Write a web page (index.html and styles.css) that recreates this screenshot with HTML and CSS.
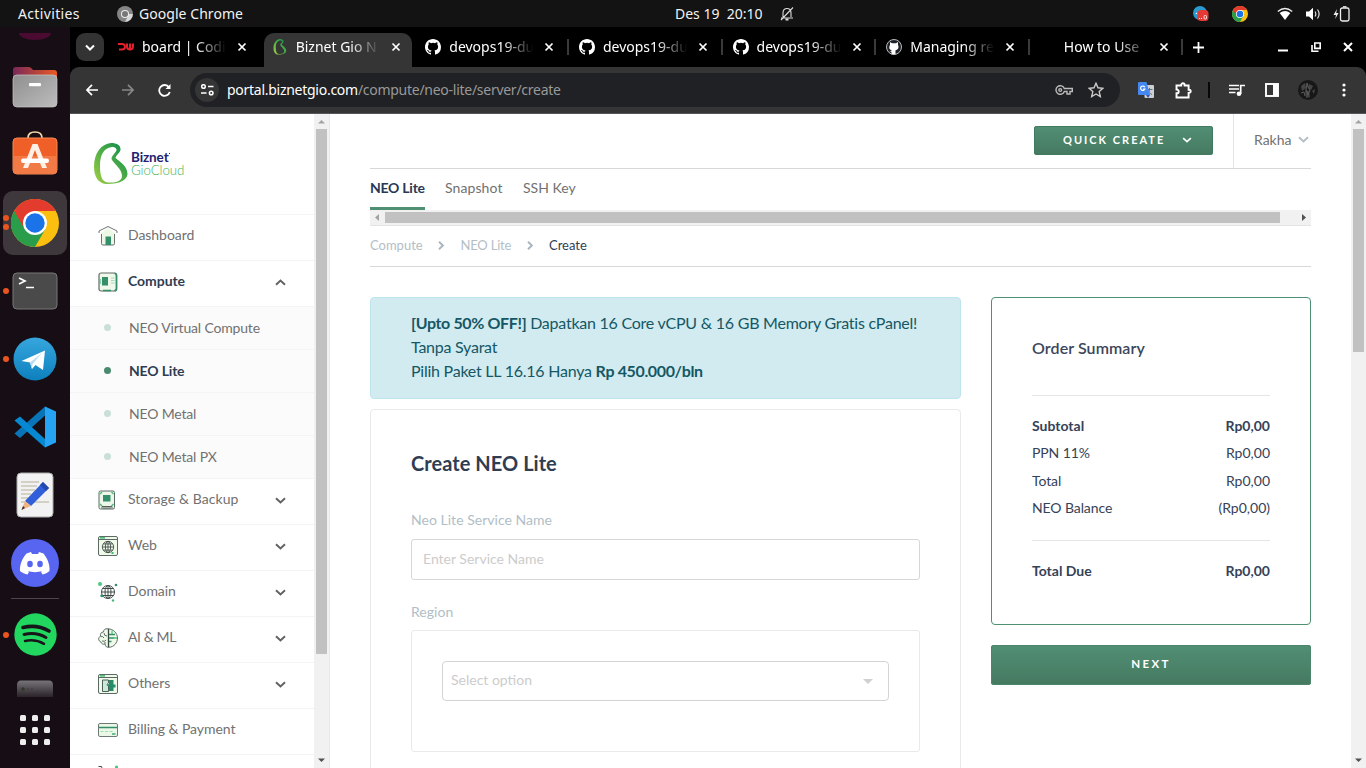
FILE: index.html
```html
<!DOCTYPE html>
<html lang="id">
<head>
<meta charset="utf-8">
<title>Biznet Gio NEO Lite</title>
<link rel="stylesheet" href="styles.css">
</head>
<body>
<svg class="defs" aria-hidden="true">
  <defs>
    <linearGradient id="leaf" x1="0" y1="1" x2="1" y2="0"><stop offset="0" stop-color="#a5cf45"/><stop offset=".5" stop-color="#4fae47"/><stop offset="1" stop-color="#07884b"/></linearGradient>
    <linearGradient id="folder" x1="0" y1="0" x2="1" y2="0"><stop offset="0" stop-color="#79285a"/><stop offset="1" stop-color="#ea5a22"/></linearGradient>
    <linearGradient id="grey" x1="0" y1="0" x2="1" y2="1"><stop offset="0" stop-color="#8f8f8f"/><stop offset="1" stop-color="#bdbdbd"/></linearGradient>
    <linearGradient id="tele" x1="0" y1="0" x2="0" y2="1"><stop offset="0" stop-color="#37a6de"/><stop offset="1" stop-color="#0d80bd"/></linearGradient>
    <linearGradient id="drive" x1="0" y1="0" x2="0" y2="1"><stop offset="0" stop-color="#77747a"/><stop offset="1" stop-color="#2a2328"/></linearGradient>
    <symbol id="x" viewBox="0 0 10 10"><path d="M1.5 1.5l7 7M8.5 1.5l-7 7" stroke="#fff" stroke-width="1.7" fill="none"/></symbol>
    <symbol id="gh" viewBox="0 0 16 16"><path fill="#fff" d="M8 0C3.58 0 0 3.58 0 8c0 3.54 2.29 6.53 5.47 7.59.4.07.55-.17.55-.38 0-.19-.01-.82-.01-1.49-2.01.37-2.53-.49-2.69-.94-.09-.23-.48-.94-.82-1.13-.28-.15-.68-.52-.01-.53.63-.01 1.08.58 1.23.82.72 1.21 1.87.87 2.33.66.07-.52.28-.87.51-1.07-1.78-.2-3.64-.89-3.64-3.95 0-.87.31-1.59.82-2.15-.08-.2-.36-1.02.08-2.12 0 0 .67-.21 2.2.82a7.6 7.6 0 0 1 4 0c1.53-1.04 2.2-.82 2.2-.82.44 1.1.16 1.92.08 2.12.51.56.82 1.27.82 2.15 0 3.07-1.87 3.75-3.65 3.95.29.25.54.73.54 1.48 0 1.07-.01 1.93-.01 2.2 0 .21.15.46.55.38A8 8 0 0 0 16 8c0-4.42-3.58-8-8-8z"/></symbol>
    <symbol id="down" viewBox="0 0 11 7"><path d="M1 1.200L5.500 5.400 10 1.200" fill="none" stroke="currentColor" stroke-width="2"/></symbol>
    <symbol id="right" viewBox="0 0 6 9"><path d="M1 .8l3.800 3.700L1 8.200" fill="none" stroke="currentColor" stroke-width="1.900"/></symbol>
    <symbol id="chrome" viewBox="0 0 48 48"><circle cx="24" cy="24" r="24" fill="#fbbf0f"/><path d="M24 24L3.2 12A24 24 0 0 0 24 48l10.4-18z" fill="#2a9d4a"/><path d="M3.2 12a24 24 0 0 1 41.6 0H24L13.6 30z" fill="#e33b2e"/><circle cx="24" cy="24" r="12" fill="#fff"/><circle cx="24" cy="24" r="9.7" fill="#1a73e8"/></symbol>
    <symbol id="beta" viewBox="0 0 34 42"><path fill="url(#leaf)" fill-rule="evenodd" d="M17 0C23 0 27 2.500 26.500 7C26 10 22 12 21.500 15C26 19 33.500 23 33.500 31C33 37 26 41 13 41C4 41 0 33 0 24C0 10 7 1 17 0ZM18 4C9 5 6 13 6 23C6 33 8 39 14 39.500C22 40 28 38 28 33C28 26 20 21 17.500 16C17.500 12 23 9 22.500 6.500C22 4.500 20 4 18 4Z"/></symbol>
    <symbol id="globe" viewBox="0 0 16 16"><g fill="none" stroke="#414c49"><circle cx="8" cy="8" r="6.500"/><ellipse cx="8" cy="8" rx="3" ry="6.500"/><path d="M8 1.500v13M1.500 8h13M2.500 4.500h11M2.500 11.500h11"/></g></symbol>
  </defs>
</svg>

<header class="topbar">
  <span class="activities">Activities</span>
  <svg class="app-ic" viewBox="0 0 16 16"><circle cx="8" cy="8" r="8" fill="#858585"/><path d="M8 8h7.800A8 8 0 0 1 8 16l3-6" fill="#d8d8d8"/><circle cx="8" cy="8" r="4" fill="#eee"/><circle cx="8" cy="8" r="3" fill="#777"/></svg>
  <span class="app-name">Google Chrome</span>
  <span class="clock">Des 19&nbsp; 20:10</span>
  <svg class="bell" viewBox="0 0 14 14" fill="none" stroke="#ddd" stroke-width="1.100"><path d="M1 11h12M3 10V6c0-3 1.500-4.500 4-4.500S11 3 11 6v4M1 13L13 .5"/><path d="M5.500 12.500h3" stroke-width="2"/></svg>
  <div class="tray">
    <svg class="t1" viewBox="0 0 16 16"><circle cx="7" cy="7" r="7" fill="#299bd0"/><circle cx="3.500" cy="7.500" r=".8" fill="#fff"/><rect x="4.500" y="4" width="11" height="11" rx="3.500" fill="#e53935"/><path d="M6 12.500h1M8 12.500h1" stroke="#fff"/><rect x="11" y="9.500" width="2.500" height="3.500" rx="1" stroke="#fff" stroke-width=".8" fill="none"/></svg>
    <svg class="t2"><use href="#chrome"/></svg>
    <svg class="t3" viewBox="0 0 16 14"><path d="M.8 4.500Q8-1.500 15.200 4.500" fill="none" stroke="#eee" stroke-width="1.300"/><path d="M2.700 6Q8 2 13.300 6L8 13z" fill="#fff"/></svg>
    <svg class="t4" viewBox="0 0 15 14"><path d="M0 4.500h3L7 .8v12.400L3 9.500H0z" fill="#fff"/><path d="M9 4.500q1.700 2.500 0 5M11.500 2.500q3.200 4.500 0 9" fill="none" stroke="#ddd" stroke-width="1.200"/></svg>
    <svg class="t5" viewBox="0 0 17 16"><path d="M4 3L.5 9H3l-.8 4L5.500 7H3.200z" fill="#eee"/><rect x="7.500" y="2" width="8.500" height="13" rx="1.800" fill="none" stroke="#eee" stroke-width="1.300"/><path d="M10 .8h3.500" stroke="#eee" stroke-width="1.300"/></svg>
  </div>
</header>

<div class="desktop">
<aside class="dock">
  <div class="d-top"></div>
  <svg class="ic files" viewBox="0 0 46 42"><path d="M1 12V4q0-3 3-3h13q2 0 4 3h21q3 0 3 3v8z" fill="url(#folder)"/><rect x="1" y="9" width="44" height="32" rx="4" fill="url(#grey)" stroke="#c8c8c8" stroke-width=".7"/><rect x="17" y="17" width="12" height="3.200" rx="1" fill="#fff"/></svg>
  <svg class="ic store" viewBox="0 0 46 44"><path d="M16 10V7q0-6 7-6t7 6v3" fill="none" stroke="#f3d9a9" stroke-width="1.700"/><rect x="1" y="7" width="44" height="36" rx="4" fill="#f15f28" stroke="#f58a57"/><path d="M1.500 25h43v14q0 3.500-3.500 3.500H5q-3.500 0-3.500-3.500z" fill="#f27a47"/><path d="M11 37l9.500-24h5L35 37h-5l-7-18-7 18z" fill="#fff0e6"/><rect x="9" y="27.500" width="28" height="4.500" rx="2.200" fill="#fff"/></svg>
  <div class="chrome-tile"><i class="dot a"></i><i class="dot b"></i><svg width="48" height="48"><use href="#chrome"/></svg></div>
  <div class="slot term"><i class="dot"></i><svg width="46" height="38" viewBox="0 0 46 38"><rect x="1" y="1" width="44" height="36" rx="4" fill="#4a4a4a" stroke="#777"/><path d="M7 6l6 3-6 3M14 15.500h8" stroke="#fff" stroke-width="1.700" fill="none"/></svg></div>
  <div class="slot tele"><i class="dot"></i><svg width="44" height="44" viewBox="0 0 44 44"><circle cx="22" cy="22" r="21.500" fill="url(#tele)"/><path d="M8.500 24L32 13.500 30 33l-7.500-5-3.500 4-2-6.500z" fill="#fff"/><path d="M17 25.500L29 16 19.500 27l-.5 5z" fill="#b8dcef"/></svg></div>
  <svg class="ic code" viewBox="0 0 42 42"><path d="M.5 27.500L31 .5v9L6 32z" fill="#0974b8"/><path d="M.5 14.500L6 10.500 31 33v8.500z" fill="#0788d2"/><path d="M31 .5l11 5v31l-11 5z" fill="#27a3f3"/></svg>
  <svg class="ic note" viewBox="0 0 38 46"><rect x="1" y="1" width="36" height="44" rx="4" fill="#f2f2f2" stroke="#aaa"/><path d="M5 10h18M5 14h16M5 18h14M5 22h10M5 26h8M5 30h6M17 30h16" stroke="#c9c6b6" stroke-width="1.600"/><path d="M9 29L27 10l6 6-18 18z" fill="#315fd9"/><path d="M27 10l6 6 -3 3-6-6z" fill="#2548ae"/><path d="M9 29l6 5-9.500 4z" fill="#efb482"/><path d="M7 34l2 2-3.500 2z" fill="#333"/></svg>
  <svg class="ic disc" viewBox="0 0 48 48"><circle cx="24" cy="24" r="24" fill="#5765f0"/><path d="M15.500 14.500l4.500-1.500 1 2h6l1-2 4.500 1.500c4 5 6.500 11 6 17.500-2 2-4.500 3-7 3.500L30 33l1-1c-4 1.500-10 1.500-14 0l1 1-1.500 2.500C14 35 11 34 9 32c-.5-6.500 2.500-13 6.500-17.500z" fill="#fff"/><ellipse cx="19" cy="25" rx="2.800" ry="3.200" fill="#5765f0"/><ellipse cx="29" cy="25" rx="2.800" ry="3.200" fill="#5765f0"/></svg>
  <div class="d-line"></div>
  <div class="slot spot"><i class="dot"></i><svg width="43" height="43" viewBox="0 0 43 43"><circle cx="21.500" cy="21.500" r="21.200" fill="#22d760"/><g fill="none" stroke="#18151a" stroke-linecap="round"><path d="M9 14.500q14-3.500 26 3.500" stroke-width="3.600"/><path d="M10 21.500q12-3 22 3" stroke-width="3"/><path d="M11 28q10-2.500 19 2.800" stroke-width="2.500"/></g></svg></div>
  <svg class="ic drive" viewBox="0 0 38 17"><path d="M1 17V5q0-4.500 4-4.500h28q4 0 4 4.500v12z" fill="url(#drive)"/><circle cx="7" cy="9" r="1.800" fill="#33362a"/><circle cx="12" cy="9" r="1" fill="#443e43"/><circle cx="16" cy="9" r="1" fill="#443e43"/></svg>
  <div class="apps"><i></i><i></i><i></i><i></i><i></i><i></i><i></i><i></i><i></i></div>
</aside>

<section class="browser">
  <div class="tabstrip">
    <div class="tab-search"><svg width="10" height="7" viewBox="0 0 10 7"><path d="M1 1.500l4 4 4-4" fill="none" stroke="#fff" stroke-width="2"/></svg></div>
    <div class="tab"><svg class="fav" viewBox="0 0 16 16"><path d="M0 5h4q3 0 3 2.700t-3 2.700H1M9 4.500v3q0 3 3 3t3-3v-3M12 4.500v5.500" stroke="#e3202b" stroke-width="2" fill="none"/></svg><span class="tt">board | Codi</span><svg class="cl"><use href="#x"/></svg></div>
    <div class="tab active"><svg class="fav"><use href="#beta"/></svg><span class="tt">Biznet Gio N</span><svg class="cl"><use href="#x"/></svg></div>
    <div class="tab sep"><svg class="fav"><use href="#gh"/></svg><span class="tt">devops19-du</span><svg class="cl"><use href="#x"/></svg></div>
    <div class="tab sep"><svg class="fav"><use href="#gh"/></svg><span class="tt">devops19-du</span><svg class="cl"><use href="#x"/></svg></div>
    <div class="tab sep"><svg class="fav"><use href="#gh"/></svg><span class="tt">devops19-du</span><svg class="cl"><use href="#x"/></svg></div>
    <div class="tab sep"><svg class="fav" viewBox="0 0 16 16"><circle cx="8" cy="8" r="7.500" fill="#1d2329" stroke="#bbb"/><path d="M4 3l2 1.200h4L12 3v3c1.500 3-.5 5-2.500 5.200v4h-4v-2L3.500 12l2 .2v-1C3.500 10.500 2.500 9 4 6z" fill="#fff"/></svg><span class="tt">Managing re</span><svg class="cl"><use href="#x"/></svg></div>
    <div class="tab sep"><span class="fav"></span><span class="tt">How to Use</span><svg class="cl"><use href="#x"/></svg></div>
    <svg class="plus" viewBox="0 0 10 10"><path d="M5 0v10M0 5h10" stroke="#fff" stroke-width="1.600"/></svg>
    <div class="winbtns">
      <svg width="10" height="10"><path d="M0 8.500h10" stroke="#fff" stroke-width="2"/></svg>
      <svg width="10" height="10"><path d="M3.800 1h5.400v5.400H3.800zM1 3v6.200h6.500" stroke="#fff" stroke-width="1.600" fill="none"/></svg>
      <svg width="10" height="10" viewBox="0 0 10 10"><path d="M1 1l8 8M9 1L1 9" stroke="#fff" stroke-width="2"/></svg>
    </div>
  </div>
  <div class="toolbar">
    <svg class="nav n1" viewBox="0 0 12 12"><path d="M12 6H1M6 .8L.9 6 6 11.200" fill="none" stroke="#fff" stroke-width="1.700"/></svg>
    <svg class="nav n2" viewBox="0 0 12 12"><path d="M0 6h11M6 .8L11.100 6 6 11.200" fill="none" stroke="#888" stroke-width="1.700"/></svg>
    <svg class="nav n3" viewBox="0 0 13 13"><path d="M11.800 8A5.400 5.400 0 1 1 11 3.200" fill="none" stroke="#fff" stroke-width="1.800"/><path d="M12.500 0v5H7.500z" fill="#fff"/></svg>
    <div class="omni">
      <span class="site"><svg width="13" height="12" viewBox="0 0 13 12" fill="none" stroke="#fff" stroke-width="1.500"><circle cx="2.500" cy="2.500" r="1.800"/><path d="M7 2.500h5.500M0 9h5.500"/><circle cx="10.200" cy="9" r="1.800"/></svg></span>
      <span class="url"><b>portal.biznetgio.com</b>/compute/neo-lite/server/create</span>
      <svg class="key" viewBox="0 0 18 10" fill="none" stroke="#bbb" stroke-width="1.400"><path d="M9.300 3.500A4.300 4.300 0 1 0 9.300 6.500H12v2.500h3V6.500h2.300v-3z"/><circle cx="5.200" cy="5" r="1.400"/></svg>
      <svg class="star" viewBox="0 0 16 16"><path d="M8 1.300l2 4.500 4.900.5-3.700 3.300 1.100 4.900L8 12l-4.300 2.500 1.100-4.900L1.100 6.300 6 5.800z" fill="none" stroke="#ccc" stroke-width="1.400"/></svg>
    </div>
    <svg class="b1" viewBox="0 0 16 16"><rect x="6.500" y="3" width="9.500" height="13" rx="1" fill="#ccd0d4"/><path d="M8.500 7.500h6M11.500 6v1.500c0 2-1 3.500-2.500 5M9.500 8c1 2.500 2.500 3.500 4.500 4.500" stroke="#64707a" fill="none"/><path d="M0 1q0-1 1-1h7.500l3.500 13H1q-1 0-1-1z" fill="#4688f1"/><path d="M8 13h4l-2 3z" fill="#3059b5"/><path d="M6.800 5.200A2.200 2.200 0 1 0 6.900 7H5" fill="none" stroke="#fff" stroke-width="1.200"/></svg>
    <svg class="b2" viewBox="0 0 17 17"><path d="M1.500 3.500h4.700V3a1.700 1.700 0 0 1 3.400 0v.5h4v4.200h.5a1.600 1.600 0 0 1 0 3.200h-.5v4.600H1.500v-4.200c3 0 3-3.800 0-3.800z" fill="none" stroke="#fff" stroke-width="1.900"/></svg>
    <i class="bsep"></i>
    <svg class="b3" viewBox="0 0 16 13"><path d="M0 1.500h10M0 5h10M0 8.500h6.500" stroke="#fff" stroke-width="1.700"/><circle cx="10" cy="9.800" r="2.300" fill="#fff"/><path d="M11.700 10V1.500H16" stroke="#fff" stroke-width="1.700" fill="none"/></svg>
    <svg class="b4" viewBox="0 0 14 14"><rect x="1" y="1" width="12" height="12" fill="none" stroke="#fff" stroke-width="1.900"/><path d="M8 1h5v12H8z" fill="#fff"/></svg>
    <svg class="b5" viewBox="0 0 20 20"><circle cx="10" cy="10" r="10" fill="#171717"/><path d="M3 6l4-3 1 5-4 3zM11 4l4 2-2 4-3-2zM7 10l4 1 1 6-4 1zM14 11l3-2-1 5z" fill="#444"/><path d="M9 3l1 4 2 3-2 5-2-5zM3 13l3-1 1 4" stroke="#5c5c5c" fill="none"/></svg>
    <svg class="b6" width="4" height="14"><g fill="#fff"><circle cx="2" cy="2" r="1.600"/><circle cx="2" cy="7" r="1.600"/><circle cx="2" cy="12" r="1.600"/></g></svg>
  </div>

  <div class="page">
    <nav class="side">
      <div class="logo"><svg width="34" height="42"><use href="#beta"/></svg><div class="lt"><b>Biznet<i></i></b><span>GioCloud</span></div></div>
      <div class="row"><svg class="mi" viewBox="0 0 20 20"><path d="M3 7v12h14V7l-7-5z" fill="#ecf7e6"/><path d="M3.500 8v9.500q0 1.500 1.500 1.500h10q1.500 0 1.500-1.500V8M1 7V5l9-4.500L19 5v2" fill="none" stroke="#6b7570"/><path d="M7.500 10.500H13V19H7.500z" fill="#358f6b"/></svg><span>Dashboard</span></div>
      <div class="row on"><svg class="mi" viewBox="0 0 20 20"><rect x="1" y="1" width="17.500" height="18" rx="2" fill="#eff8e9" stroke="#5c6a65" stroke-width="1.200"/><path d="M16.500 1.500q2 0 2 2v13q0 2-2 2M5 18.500h8" stroke="#358f6b" stroke-width="1.700" fill="none"/><path d="M4 5h6v8.500H4z" fill="#358f6b"/><path d="M2.500 7v5" stroke="#8dd0a9"/><path d="M13 6h3.500M13 8.500h3.500M13 11h3.500" stroke="#9ddac4" stroke-width="1.200"/></svg><span>Compute</span><svg class="chev up"><use href="#down"/></svg></div>
      <div class="sub"><i></i><span>NEO Virtual Compute</span></div>
      <div class="sub on"><i></i><span>NEO Lite</span></div>
      <div class="sub"><i></i><span>NEO Metal</span></div>
      <div class="sub"><i></i><span>NEO Metal PX</span></div>
      <div class="row wide"><svg class="mi" viewBox="0 0 20 20"><rect x="1" y="1" width="15.500" height="18" rx="1.500" fill="#edf7e9" stroke="#5d6964"/><path d="M5 5h7.500v6.500H5z" fill="#358f6b"/><path d="M4 18.500v-2h10v2M6 17v2M8 17v2M10 17v2M12 17v2" stroke="#56605c" fill="none"/><path d="M2 4l2-2M13.500 2l2 2M2 14l2 2M15.500 14l-2 2" stroke="#55bb7d" stroke-width="1.500"/></svg><span>Storage &amp; Backup</span><svg class="chev"><use href="#down"/></svg></div>
      <div class="row"><svg class="mi" viewBox="0 0 20 20"><rect x=".5" y=".5" width="19" height="19" rx="1.500" fill="#effae9" stroke="#5d6964"/><path d="M1 3.500h18" stroke="#5d6964"/><path d="M2 1.800h5" stroke="#50bd7b" stroke-width="1.700"/><use href="#globe" x="3" y="4" width="14" height="14"/><path d="M14.500 16v2" stroke="#44b77b" stroke-width="2"/></svg><span>Web</span><svg class="chev"><use href="#down"/></svg></div>
      <div class="row"><svg class="mi" viewBox="0 0 20 20"><use href="#globe" x="2" y="2" width="16" height="16"/><circle cx="2" cy="2" r="2" fill="#4cc87e"/><circle cx="18" cy="3" r="1.300" fill="#358f6b"/><circle cx="3.800" cy="13.800" r="1.500" fill="#358f6b"/><circle cx="15" cy="18.500" r="1.200" fill="#44b77b"/></svg><span>Domain</span><svg class="chev"><use href="#down"/></svg></div>
      <div class="row narrow"><svg class="mi" viewBox="0 0 20 20"><path d="M10 .8C7 .2 5.500 2 5.500 4 3 4 2 6 2.500 8 0 9.500 0 13 3 14c1 3 3 2 4 2 .5 3 2 3.500 4 3.300 5-.3 8.500-4.500 8.500-9.300S15 .8 10 .8z" fill="#effae9" stroke="#606d68"/><path d="M10.500 1v18" stroke="#33473f" stroke-width="1.300"/><path d="M11 6.500h6M11 10h5M11 13.500h2.500" stroke="#358f6b" stroke-width="1.300"/><path d="M6 5q0 3 3 3M2.500 8.500Q5 8 6 10M4 13q3 1 4-1M7 16v-2" fill="none" stroke="#606d68"/><path d="M14 2.500V6M15.500 10h3.500" stroke="#4cc87e" stroke-width="1.300"/></svg><span>AI &amp; ML</span><svg class="chev"><use href="#down"/></svg></div>
      <div class="row"><svg class="mi" viewBox="0 0 20 20"><rect x=".5" y=".5" width="19" height="19" rx="1.500" fill="#effae9" stroke="#5d6964"/><path d="M1 3.500h18" stroke="#5d6964"/><path d="M2 1.800h5" stroke="#50bd7b" stroke-width="1.700"/><path d="M4.500 6h6v3q-3 1 0 3v5.500h-6z" fill="#cbeadb" stroke="#4f6159"/><path d="M11 6h4.500v4.500h2v3h-2V17H11v-4.500L8.500 11l2.500-1z" fill="#278c6a"/></svg><span>Others</span><svg class="chev"><use href="#down"/></svg></div>
      <div class="row"><svg class="mi" viewBox="0 0 20 20"><rect x=".5" y="3.500" width="19" height="13" rx="1.500" fill="#ebf8e7" stroke="#6e7b75"/><path d="M1 7.500h18" stroke="#358f6b" stroke-width="1.500"/><path d="M2.500 11.500h3M7 11.500h3M11.500 11.500h3" stroke="#9ee0b6"/><path d="M14 14h3.500" stroke="#41ad78" stroke-width="1.500"/></svg><span>Billing &amp; Payment</span></div>
      <div class="row last"><svg class="mi" viewBox="0 0 20 20"><path d="M.5 1.500h3L6 9h10" fill="none" stroke="#414c49"/><circle cx="18.500" cy="2" r="1.600" fill="#4cc87e"/></svg></div>
    </nav>
    <div class="vbar"><svg viewBox="0 0 15 15"><path d="M4 9.500h7L7.500 6z" fill="#a3a3a3"/></svg><i class="thumb s"></i><svg class="end" viewBox="0 0 15 15"><path d="M4 5.500h7L7.500 9z" fill="#505050"/></svg></div>

    <main class="main">
      <div class="head"><button class="qc"><span>QUICK CREATE</span><svg class="chev"><use href="#down"/></svg></button><div class="user"><span>Rakha</span><svg class="chev"><use href="#down"/></svg></div></div>
      <div class="mtabs"><span class="cur">NEO Lite</span><span class="sn">Snapshot</span><span class="ssh">SSH Key</span></div>
      <div class="hbar"><svg viewBox="0 0 15 15"><path d="M9 4v7L5 7.500z" fill="#a3a3a3"/></svg><i></i><svg class="end" viewBox="0 0 15 15"><path d="M6 4v7l4-3.500z" fill="#505050"/></svg></div>
      <div class="crumbs"><span class="c1">Compute</span><svg><use href="#right"/></svg><span class="c2">NEO Lite</span><svg><use href="#right"/></svg><span class="now">Create</span></div>
      <div class="cols">
        <div class="left">
          <div class="promo"><p><strong>[Upto 50% OFF!]</strong> Dapatkan 16 Core vCPU &amp; 16 GB Memory Gratis cPanel!</p><p>Tanpa Syarat</p><p>Pilih Paket LL 16.16 Hanya <strong>Rp 450.000/bln</strong></p></div>
          <div class="form">
            <h1>Create NEO Lite</h1>
            <label>Neo Lite Service Name</label>
            <div class="input">Enter Service Name</div>
            <label class="l2">Region</label>
            <div class="region"><div class="select"><span>Select option</span><svg width="10" height="5"><path d="M0 0h10L5 5z" fill="#d0d0d0"/></svg></div></div>
          </div>
        </div>
        <div class="rightcol">
          <div class="order">
            <h2>Order Summary</h2>
            <dl><div class="b"><dt>Subtotal</dt><dd>Rp0,00</dd></div><div><dt>PPN 11%</dt><dd>Rp0,00</dd></div><div><dt>Total</dt><dd>Rp0,00</dd></div><div><dt>NEO Balance</dt><dd>(Rp0,00)</dd></div></dl>
            <div class="due"><span>Total Due</span><span>Rp0,00</span></div>
          </div>
          <button class="next">NEXT</button>
        </div>
      </div>
    </main>
    <div class="vbar plain"><svg viewBox="0 0 15 15"><path d="M4 9.500h7L7.500 6z" fill="#a3a3a3"/></svg><i class="thumb p"></i><svg class="end" viewBox="0 0 15 15"><path d="M4 5.500h7L7.500 9z" fill="#505050"/></svg></div>
  </div>
</section>
</div>
</body>
</html>
```

FILE: styles.css
```css
* { box-sizing: border-box; }
html, body { margin: 0; height: 768px; overflow: hidden; background: #170e15; }
body { font-family: Lato, "Liberation Sans", sans-serif; font-size: 14px; }
svg { display: block; flex: none; }
p, h1, h2, dl, dd { margin: 0; }
button { border: 0; padding: 0; font: inherit; }
.defs { position: absolute; width: 0; height: 0; }

.topbar { position: relative; display: flex; align-items: center; height: 27px; background: #131313; color: #f2f2f2; font: 14px/27px "Noto Sans", sans-serif; padding-left: 18px; white-space: nowrap; }
.activities { width: 99px; letter-spacing: .35px; }
.app-ic { width: 16px; height: 16px; margin-right: 6px; }
.app-name { width: 536px; letter-spacing: .05px; }
.clock { width: 105px; letter-spacing: 0; }
.bell { width: 14px; height: 14px; }
.tray { display: flex; align-items: center; margin-left: auto; padding-right: 16px; }
.t1, .t2 { width: 16px; height: 16px; }
.t2 { margin-left: 23px; }
.t3 { width: 16px; height: 14px; margin-left: 29px; }
.t4 { width: 15px; height: 14px; margin-left: 13px; }
.t5 { width: 17px; height: 16px; margin-left: 12px; }

.desktop { display: flex; height: 741px; }
.dock { width: 70px; background: #170e15; display: flex; flex-direction: column; align-items: center; overflow: hidden; }
.d-top { width: 32px; height: 7px; margin-top: 6px; border-radius: 0 0 16px 16px / 0 0 7px 7px; background: #4b0b31; }
.files { width: 46px; height: 42px; margin-top: 26px; }
.store { width: 46px; height: 44px; margin-top: 23px; }
.chrome-tile { position: relative; width: 64px; height: 64px; margin-top: 16px; border-radius: 10px; background: #3e383d; display: grid; place-items: center; }
.dot { position: absolute; width: 6px; height: 6px; border-radius: 50%; background: #e95420; left: 3px; }
.dot.a { left: 0; top: 24px; }
.dot.b { left: 0; top: 33px; }
.slot { position: relative; width: 70px; display: grid; place-items: center; }
.slot .dot { top: calc(50% - 3px); }
.term { margin-top: 17px; }
.tele { margin-top: 27px; }
.code { width: 42px; height: 42px; margin-top: 25px; }
.note { width: 38px; height: 46px; margin-top: 24px; }
.disc { width: 48px; height: 48px; margin-top: 21px; }
.d-line { width: 48px; height: 1px; background: #4c454a; margin-top: 11px; }
.spot { margin-top: 14px; }
.drive { width: 38px; height: 17px; margin-top: 24px; }
.apps { display: grid; grid-template-columns: repeat(3, 6px); gap: 6px; margin-top: 18px; }
.apps i { width: 6px; height: 6px; background: #eee; border-radius: 1.5px; }

.browser { flex: 1; display: flex; flex-direction: column; min-width: 0; background: #000; }
.tabstrip { height: 40px; display: flex; align-items: flex-start; padding: 6px 14px 0 6px; font: 14px/28px "Noto Sans", sans-serif; color: #fff; }
.tab-search { width: 28px; height: 28px; border-radius: 9px; background: #333; display: grid; place-items: center; margin-right: 6px; }
.tab { position: relative; width: 153.65px; height: 34px; padding-left: 8px; display: flex; align-items: flex-start; }
.fav { width: 16px; height: 16px; margin: 6px 8px 0 0; }
.tt { width: 86px; white-space: nowrap; mask-image: linear-gradient(90deg, #000 62%, transparent 98%); }
.cl { width: 10px; height: 10px; margin: 9px 0 0 9px; }
.sep::after { content: ""; position: absolute; right: 2px; top: 6px; width: 2px; height: 16px; background: #3a3a3a; }
.active::before { content: ""; position: absolute; z-index: 0; left: 0; top: 0; width: 148px; height: 34px; background: #353535; border-radius: 10px 10px 0 0; }
.active > * { position: relative; }
.plus { width: 11px; height: 11px; margin: 9px 0 0 8px; }
.winbtns { display: flex; gap: 22.500px; margin: 9px -1px 0 auto; }
.toolbar { height: 47px; background: #353535; border-radius: 9px 9px 0 0; border-bottom: 1px solid #55555a; display: flex; align-items: center; padding-left: 16px; }
.nav { width: 12px; height: 12px; }
.n2 { margin-left: 24px; }
.n3 { width: 13px; height: 13px; margin-left: 24px; }
.omni { width: 930px; height: 34px; margin-left: 19px; border-radius: 17px; background: #202124; display: flex; align-items: center; }
.site { width: 24px; height: 24px; margin-left: 5px; border-radius: 50%; background: #353535; display: grid; place-items: center; }
.url { width: 836px; padding-left: 8px; color: #999; font: 14px/34px "Noto Sans", sans-serif; letter-spacing: -.27px; white-space: nowrap; }
.url b { font-weight: 400; color: #fff; }
.key { width: 18px; height: 10px; }
.star { width: 16px; height: 16px; margin-left: 15px; }
.b1 { width: 16px; height: 16px; margin-left: 18px; }
.b2 { width: 17px; height: 17px; margin-left: 21px; }
.bsep { width: 2px; height: 16px; background: #080808; margin-left: 16px; }
.b3 { width: 16px; height: 13px; margin-left: 19px; }
.b4 { width: 14px; height: 14px; margin-left: 20px; }
.b5 { width: 20px; height: 20px; margin-left: 19px; }
.b6 { margin-left: 24px; }

.page { flex: 1; display: flex; min-height: 0; background: #fff; }
.side { width: 244px; overflow: hidden; color: #717171; letter-spacing: -.05px; }
.logo { height: 101px; border-bottom: 1px solid #f4f4f4; display: flex; align-items: center; padding-left: 24px; }
.lt { margin-left: 3px; font-size: 14px; letter-spacing: -.1px; }
.lt b, .lt span { display: block; height: 13px; line-height: 13px; }
.lt b { color: #24216f; font-size: 13.500px; }
.lt b i { display: inline-block; width: 1.500px; height: 1.500px; background: #24216f; vertical-align: 8px; }
.lt span { color: #42b35b; font-weight: 300; font-size: 13.300px; }
.row { height: 46px; border-bottom: 1px solid #f4f4f4; display: flex; align-items: center; padding: 0 28px 6px; }
.wide { letter-spacing: .08px; }
.narrow { letter-spacing: -.4px; }
.mi { width: 20px; height: 20px; margin-right: 10px; }
.row .mi { margin-top: 3px; }
.chev { width: 11px; height: 7px; margin-left: auto; color: #626262; }
.row .chev { margin-top: 4px; }
.up { transform: scaleY(-1); }
.row.on, .sub.on { color: #2f3d53; font-weight: 700; }
.sub { height: 43px; background: #fbfbfb; border-bottom: 1px solid #f4f4f4; display: flex; align-items: center; padding: 0 0 1px 34px; letter-spacing: -.17px; }
.sub span { padding-bottom: 1px; }
.sub i { width: 7px; height: 7px; border-radius: 50%; background: #c9dfd7; margin-right: 18px; }
.sub.on i { background: #4a8a6f; }
.row.last { align-items: flex-start; padding: 10px 28px 0; }
.row.last .mi { margin-top: 0; }
.vbar { width: 16px; background: #f1f1f1; border-right: 1px solid #e7e7e7; display: flex; flex-direction: column; }
.plain { width: 15px; border: 0; }
.vbar svg, .hbar svg { width: 15px; height: 15px; }
.vbar .end { margin-top: auto; }
.thumb { width: 11px; margin-left: 2px; background: #c1c1c1; }
.s { height: 525px; }
.p { height: 223px; }

.main { width: 1021px; padding: 0 40px; overflow: hidden; }
.head { height: 55px; border-bottom: 1px solid #d8d8d8; display: flex; justify-content: flex-end; }
.qc { width: 179px; height: 29px; margin: 12px 20px 0 0; border-radius: 3px; background: linear-gradient(#518f74, #457960); box-shadow: inset 0 0 0 1px #417a61; color: #fff; font-size: 11px; font-weight: 700; letter-spacing: 2px; display: flex; align-items: center; padding: 0 0 2px 29px; }
.qc .chev { color: #fff; width: 10px; height: 6px; margin: 1px 0 0 17px; }
.user { width: 78px; border-left: 1px solid #e5e5e5; display: flex; align-items: center; padding-left: 20px; color: #717171; padding-bottom: 4px; }
.user .chev { color: #b5bec5; margin-left: 6px; margin-top: 1px; }
.mtabs { height: 41px; display: flex; gap: 20px; line-height: 38px; color: #717171; }
.cur { color: #2a3855; font-weight: 700; border-bottom: 3px solid #4f8f73; width: 55px; white-space: nowrap; letter-spacing: -.25px; }
.sn { width: 58px; letter-spacing: .1px; }
.hbar { height: 16px; background: #f1f1f1; border-bottom: 1px solid #e3e3e3; display: flex; }
.hbar i { width: 895px; height: 11px; margin-top: 2px; background: #c1c1c1; }
.hbar .end { margin-left: auto; }
.crumbs { height: 41px; border-bottom: 1px solid #d8d8d8; display: flex; align-items: center; color: #b4bec5; padding-bottom: 2px; font-size: 13px; white-space: nowrap; }
.crumbs svg { width: 6px; height: 9px; margin: 1px 16.500px 0 16px; color: #a9b6bf; }
.c1 { width: 52px; }
.c2 { width: 50px; letter-spacing: -.2px; }
.now { color: #2f3d53; }
.cols { display: flex; gap: 30px; margin-top: 30px; }
.left { width: 591px; }
.promo { height: 102px; background: #d1ebf0; border: 1px solid #bee5eb; border-radius: 4px; padding: 13px 40px; color: #155765; font-size: 16px; line-height: 24px; letter-spacing: -.24px; white-space: nowrap; }
.promo strong { letter-spacing: -.36px; }
.form { height: 420px; margin-top: 10px; border: 1px solid #e9e9ec; border-radius: 4px; padding: 40px 40px 0; }
h1 { font-size: 20px; line-height: 26px; color: #2f3d53; font-weight: 700; letter-spacing: .05px; }
label { display: block; margin-top: 34px; line-height: 20px; color: #b1bec6; letter-spacing: .03px; }
.input { height: 41px; margin-top: 9px; border: 1px solid #d7d7d7; border-radius: 3px; line-height: 38px; padding-left: 11px; color: #ccc; }
.l2 { margin-top: 22px; }
.region { height: 122px; margin-top: 8px; border: 1px solid #e9e9ec; border-radius: 3px; padding: 30px; }
.select { height: 40px; border: 1px solid #d4d4d4; border-radius: 4px; display: flex; align-items: center; justify-content: space-between; padding: 0 15px 0 8px; color: #ccc; }
.select span { padding-bottom: 3px; }
.rightcol { width: 320px; }
.order { height: 328px; border: 1px solid #4f8f73; border-radius: 4px; padding: 38px 40px 0; color: #354258; }
h2 { font-size: 16px; line-height: 24px; font-weight: 600; height: 59px; color: #3b465a; letter-spacing: .08px; }
dl { border-top: 1px solid #e5e5e5; border-bottom: 1px solid #e5e5e5; height: 146px; padding-top: 16px; font-size: 14px; }
dl div { display: flex; justify-content: space-between; height: 27.4px; line-height: 28px; }
dl div:not(.b) dt { letter-spacing: -.1px; }
.b, .due { font-weight: 700; }
.due { display: flex; justify-content: space-between; line-height: 20px; margin-top: 20px; font-size: 14px; }
.next { display: block; width: 320px; height: 40px; padding-bottom: 3px; margin-top: 20px; border-radius: 3px; background: linear-gradient(#518f74, #457960); color: #fff; font-size: 11.500px; font-weight: 700; letter-spacing: 2.300px; box-shadow: inset 0 0 0 1px #4b856a; }
```
